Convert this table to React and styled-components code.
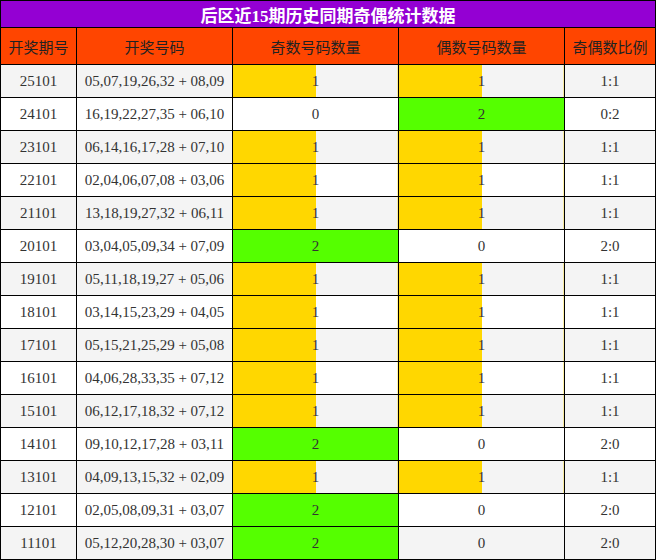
import React from "react";
import styled, { createGlobalStyle } from "styled-components";

const GlobalStyle = createGlobalStyle`
  html, body {
    margin: 0;
    padding: 0;
    background: #ffffff;
  }
`;

const Grid = styled.div`
  display: grid;
  grid-template-columns: 75px 155px 165px 165px 90px;
  grid-template-rows: 26px 36px;
  grid-auto-rows: 32px;
  gap: 1px;
  padding: 1px;
  width: 656px;
  box-sizing: border-box;
  background: #000;
  font-family: "Liberation Serif", "Noto Sans CJK SC", serif;
  color: #333;
`;

const Title = styled.div`
  grid-column: 1 / -1;
  background: #9400d3;
  color: #fff;
  font-weight: bold;
  font-size: 17px;
  display: flex;
  align-items: center;
  justify-content: center;
`;

const HeadCell = styled.div`
  background: #ff4500;
  color: #222;
  font-size: 15px;
  display: flex;
  align-items: center;
  justify-content: center;
`;

const Cell = styled.div`
  background: ${(p) => (p.$odd ? "#f4f4f4" : "#ffffff")};
  font-size: 15px;
  display: flex;
  align-items: center;
  justify-content: center;
`;

const BarCell = styled(Cell)`
  background: ${(p) =>
    p.$count === 2
      ? "#55ff00"
      : p.$count === 1
      ? `linear-gradient(to right, #ffd700 50%, ${p.$odd ? "#f4f4f4" : "#ffffff"} 50%)`
      : p.$odd
      ? "#f4f4f4"
      : "#ffffff"};
  box-shadow: ${(p) =>
    p.$count === 1 ? "inset -1px 0 0 rgba(255, 215, 0, 0.35)" : "none"};
`;

const rows = [
  ["25101", "05,07,19,26,32 + 08,09", 1, 1],
  ["24101", "16,19,22,27,35 + 06,10", 0, 2],
  ["23101", "06,14,16,17,28 + 07,10", 1, 1],
  ["22101", "02,04,06,07,08 + 03,06", 1, 1],
  ["21101", "13,18,19,27,32 + 06,11", 1, 1],
  ["20101", "03,04,05,09,34 + 07,09", 2, 0],
  ["19101", "05,11,18,19,27 + 05,06", 1, 1],
  ["18101", "03,14,15,23,29 + 04,05", 1, 1],
  ["17101", "05,15,21,25,29 + 05,08", 1, 1],
  ["16101", "04,06,28,33,35 + 07,12", 1, 1],
  ["15101", "06,12,17,18,32 + 07,12", 1, 1],
  ["14101", "09,10,12,17,28 + 03,11", 2, 0],
  ["13101", "04,09,13,15,32 + 02,09", 1, 1],
  ["12101", "02,05,08,09,31 + 03,07", 2, 0],
  ["11101", "05,12,20,28,30 + 03,07", 2, 0],
];

const headers = ["开奖期号", "开奖号码", "奇数号码数量", "偶数号码数量", "奇偶数比例"];

const App = () => {
  return (
    <>
      <GlobalStyle />
      <Grid>
        <Title>后区近15期历史同期奇偶统计数据</Title>
        {headers.map((h) => (
          <HeadCell key={h}>{h}</HeadCell>
        ))}
        {rows.map(([issue, nums, odd, even], i) => {
          const alt = i % 2 === 0;
          return (
            <React.Fragment key={issue}>
              <Cell $odd={alt}>{issue}</Cell>
              <Cell $odd={alt}>{nums}</Cell>
              <BarCell $odd={alt} $count={odd}>{odd}</BarCell>
              <BarCell $odd={alt} $count={even}>{even}</BarCell>
              <Cell $odd={alt}>{`${odd}:${even}`}</Cell>
            </React.Fragment>
          );
        })}
      </Grid>
    </>
  );
};

export default App;
